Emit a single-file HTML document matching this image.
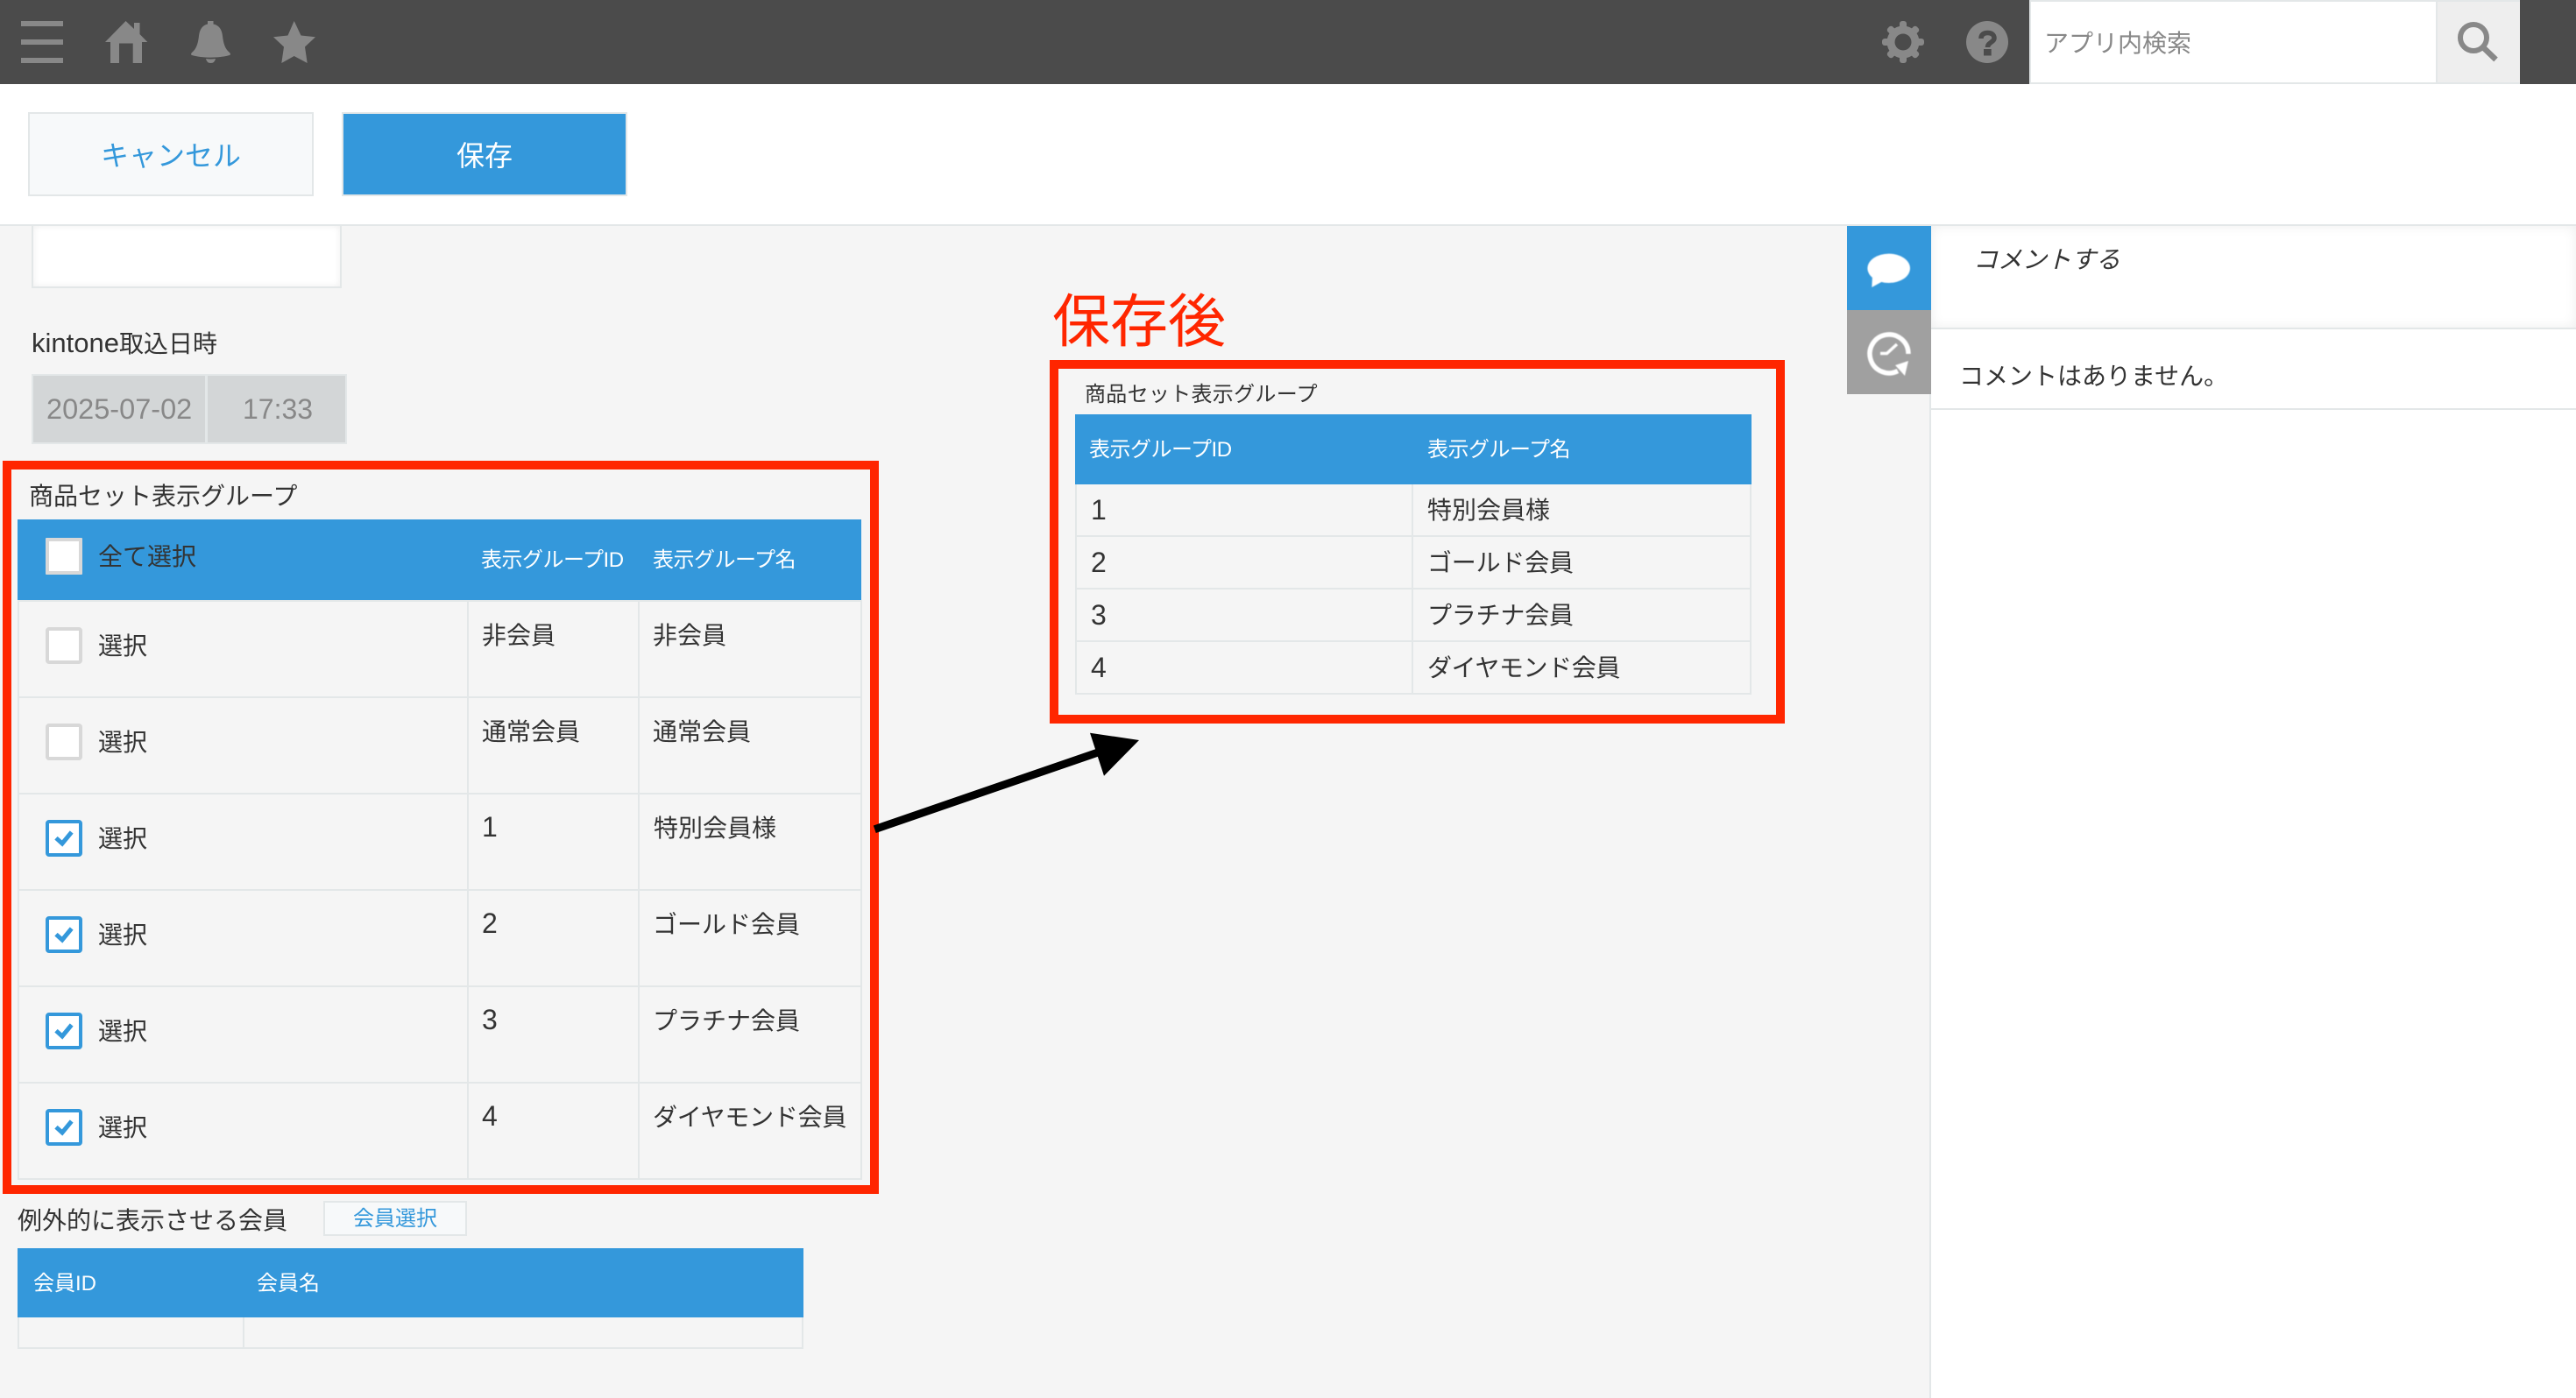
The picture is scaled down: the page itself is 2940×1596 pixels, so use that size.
<!DOCTYPE html>
<html lang="ja">
<head>
<meta charset="utf-8">
<title>kintone</title>
<style>
html,body{margin:0;padding:0}
body{position:relative;width:2940px;height:1596px;overflow:hidden;background:#f5f5f5;color:#333;font-family:"Liberation Sans","Noto Sans CJK JP",sans-serif}
div{box-sizing:border-box}
.a{position:absolute}
.t{position:absolute;white-space:nowrap;line-height:40px;height:40px;font-size:28px}
.w{color:#fff;font-size:24px}
.hd{letter-spacing:-.5px}
.n{font-size:32px}
.l{position:absolute;background:#e3e7e8}
.cb{position:absolute;left:52px;width:42px;height:42px;background:#fff;border:4px solid #d8d8d8;border-radius:4px}
.on{border-color:#3498db}
.on svg{position:absolute;left:-4px;top:-4px}
</style>
</head>
<body>

<!-- top bar -->
<div class="a" style="left:0;top:0;width:2940px;height:96px;background:#4b4b4b"></div>
<svg class="a" style="left:0;top:0" width="400" height="96" fill="#888">
<rect x="24" y="24" width="48" height="6"/><rect x="24" y="45" width="48" height="6"/><rect x="24" y="66" width="48" height="6"/>
<path d="M143.5 24 L153 33 V26 H159.5 V39 L168.3 48 H162 V72 H151.7 V49.5 H136 V72 H126 V48 H120 Z"/>
<path d="M237 24 H243.5 V27.5 C250 29 253 33 254 41 C255 50 257 56 262 60 Q264 62 262 63 C250 66.5 231 66.5 219 63 Q217 62 219 60 C224 56 226 50 227 41 C228 33 231 29 237 27.5 Z"/>
<path d="M235 67 Q240.5 68 246 67 Q245 72 240.5 72 Q236 72 235 67 Z"/>
<path d="M335.7 24 L343.5 40.5 L360 42.3 L348 53.5 L350.7 72 L335.7 64 L321.3 72 L324 53.5 L312 42.3 L328.5 40.5 Z"/>
</svg>
<svg class="a" style="left:2130px;top:0" width="180" height="96" viewBox="2130 0 180 96">
<g fill="#888">
<circle cx="2172" cy="48" r="18.5"/>
<g id="teeth">
<rect x="2168" y="24" width="8" height="48" rx="3"/>
<rect x="2148" y="44" width="48" height="8" rx="3"/>
<rect x="2168" y="24.5" width="8" height="47" rx="3" transform="rotate(45 2172 48)"/>
<rect x="2168" y="24.5" width="8" height="47" rx="3" transform="rotate(-45 2172 48)"/>
</g>
</g>
<circle cx="2172" cy="48" r="9.5" fill="#4b4b4b"/>
<circle cx="2268" cy="48" r="24" fill="#888"/>
<path d="M2261 44 C2261 39.5 2264 37.5 2268.5 37.5 C2273 37.5 2276 39.5 2276 43.5 C2276 48 2268.5 48.5 2268.5 54" fill="none" stroke="#4b4b4b" stroke-width="5.5"/>
<rect x="2264" y="56" width="8.7" height="7.5" fill="#4b4b4b"/>
</svg>

<!-- search -->
<div class="a" style="left:2316px;top:0;width:466px;height:96px;background:#fff;border-top:2px solid #e3e7e8;border-bottom:2px solid #e3e7e8;border-left:2px solid #e3e7e8"></div>
<div class="t" style="left:2333px;top:30px;color:#888">アプリ内検索</div>
<div class="a" style="left:2780px;top:0;width:96px;height:96px;background:#eee;border:2px solid #e3e7e8;border-right:none"></div>
<svg class="a" style="left:2780px;top:0" width="96" height="96" viewBox="2780 0 96 96" fill="none" stroke="#888">
<circle cx="2823" cy="43" r="15" stroke-width="6"/>
<path d="M2834.5 54.5 L2848.5 68" stroke-width="6.5"/>
</svg>

<!-- action bar -->
<div class="a" style="left:0;top:96px;width:2940px;height:162px;background:#fff;border-bottom:2px solid #e3e7e8"></div>
<div class="a" style="left:32px;top:128px;width:326px;height:96px;background:#f7f9fa;border:2px solid #e3e7e8"></div>
<div class="t" style="left:32px;top:158px;width:326px;text-align:center;font-size:32px;color:#3498db">キャンセル</div>
<div class="a" style="left:390px;top:128px;width:326px;height:96px;background:#3498db;border:2px solid #e3e7e8"></div>
<div class="t" style="left:390px;top:158px;width:326px;text-align:center;font-size:32px;color:#fff">保存</div>

<!-- partial white field -->
<div class="a" style="left:36px;top:258px;width:354px;height:71px;background:#fff;border:2px solid #e3e7e8;border-top:none;box-shadow:inset 0 0 8px rgba(0,0,0,.07)"></div>

<!-- kintone date -->
<div class="t" style="left:36px;top:372px"><span style="font-size:31px">kintone</span>取込日時</div>
<div class="a" style="left:36px;top:427px;width:200px;height:80px;background:#d3d6d7;border:2px solid #e3e7e8"></div>
<div class="a" style="left:235px;top:427px;width:161px;height:80px;background:#d3d6d7;border:2px solid #e3e7e8"></div>
<div class="t" style="left:53px;top:447px;font-size:32.5px;color:#888">2025-07-02</div>
<div class="t" style="left:277px;top:447px;font-size:32px;color:#888">17:33</div>

<!-- left table -->
<div class="t" style="left:33px;top:547px">商品セット表示グループ</div>
<div class="a" style="left:20px;top:593px;width:963px;height:92px;background:#3498db"></div>
<div class="cb" style="top:614px;border-radius:1px"></div>
<div class="t" style="left:112px;top:616px">全て選択</div>
<div class="t w hd" style="left:549px;top:620px">表示グループID</div>
<div class="t w hd" style="left:745px;top:620px">表示グループ名</div>

<div class="l" style="left:20px;top:685px;width:964px;height:2px"></div>
<div class="l" style="left:20px;top:795px;width:964px;height:2px"></div>
<div class="l" style="left:20px;top:905px;width:964px;height:2px"></div>
<div class="l" style="left:20px;top:1015px;width:964px;height:2px"></div>
<div class="l" style="left:20px;top:1125px;width:964px;height:2px"></div>
<div class="l" style="left:20px;top:1235px;width:964px;height:2px"></div>
<div class="l" style="left:20px;top:1345px;width:964px;height:2px"></div>
<div class="l" style="left:20px;top:685px;width:2px;height:662px"></div>
<div class="l" style="left:533px;top:685px;width:2px;height:662px"></div>
<div class="l" style="left:728px;top:685px;width:2px;height:662px"></div>
<div class="l" style="left:982px;top:685px;width:2px;height:662px"></div>

<div class="cb" style="top:716px"></div>
<div class="t" style="left:112px;top:718px">選択</div>
<div class="t" style="left:550px;top:706px">非会員</div>
<div class="t" style="left:745px;top:706px">非会員</div>

<div class="cb" style="top:826px"></div>
<div class="t" style="left:112px;top:828px">選択</div>
<div class="t" style="left:550px;top:816px">通常会員</div>
<div class="t" style="left:745px;top:816px">通常会員</div>

<div class="cb on" style="top:936px"><svg width="42" height="42" viewBox="52 936 42 42"><path d="M64 956.7 L71 963 L81.7 950" fill="none" stroke="#3498db" stroke-width="5"/></svg></div>
<div class="t" style="left:112px;top:938px">選択</div>
<div class="t n" style="left:550px;top:924px">1</div>
<div class="t" style="left:746px;top:926px">特別会員様</div>

<div class="cb on" style="top:1046px"><svg width="42" height="42" viewBox="52 936 42 42"><path d="M64 956.7 L71 963 L81.7 950" fill="none" stroke="#3498db" stroke-width="5"/></svg></div>
<div class="t" style="left:112px;top:1048px">選択</div>
<div class="t n" style="left:550px;top:1034px">2</div>
<div class="t" style="left:745px;top:1036px">ゴールド会員</div>

<div class="cb on" style="top:1156px"><svg width="42" height="42" viewBox="52 936 42 42"><path d="M64 956.7 L71 963 L81.7 950" fill="none" stroke="#3498db" stroke-width="5"/></svg></div>
<div class="t" style="left:112px;top:1158px">選択</div>
<div class="t n" style="left:550px;top:1144px">3</div>
<div class="t" style="left:745px;top:1146px">プラチナ会員</div>

<div class="cb on" style="top:1266px"><svg width="42" height="42" viewBox="52 936 42 42"><path d="M64 956.7 L71 963 L81.7 950" fill="none" stroke="#3498db" stroke-width="5"/></svg></div>
<div class="t" style="left:112px;top:1268px">選択</div>
<div class="t n" style="left:550px;top:1254px">4</div>
<div class="t" style="left:745px;top:1256px;letter-spacing:-.25px">ダイヤモンド会員</div>

<!-- red box left -->
<div class="a" style="left:3px;top:526px;width:1000px;height:837px;border:10px solid #ff2600"></div>

<!-- member table -->
<div class="t" style="left:20px;top:1374px">例外的に表示させる会員</div>
<div class="a" style="left:369px;top:1371px;width:164px;height:40px;background:#f7f9fa;border:2px solid #e3e7e8"></div>
<div class="t" style="left:369px;top:1372px;width:164px;text-align:center;font-size:24px;color:#3498db">会員選択</div>
<div class="a" style="left:20px;top:1425px;width:897px;height:79px;background:#3498db"></div>
<div class="t w" style="left:38px;top:1446px">会員ID</div>
<div class="t w" style="left:293px;top:1446px">会員名</div>
<div class="a" style="left:20px;top:1504px;width:897px;height:36px;border:2px solid #e3e7e8;border-top:none"></div>
<div class="l" style="left:277px;top:1504px;width:2px;height:36px"></div>

<!-- after-save -->
<div class="t" style="left:1201px;top:327px;font-size:66px;line-height:80px;height:80px;color:#ff2600">保存後</div>
<div class="a" style="left:1198px;top:411px;width:839px;height:415px;border:10px solid #ff2600"></div>
<div class="t" style="left:1238px;top:431px;font-size:24px;letter-spacing:.3px">商品セット表示グループ</div>
<div class="a" style="left:1227px;top:473px;width:772px;height:80px;background:#3498db"></div>
<div class="t w hd" style="left:1243px;top:494px">表示グループID</div>
<div class="t w hd" style="left:1629px;top:494px">表示グループ名</div>
<div class="l" style="left:1227px;top:611px;width:772px;height:2px"></div>
<div class="l" style="left:1227px;top:671px;width:772px;height:2px"></div>
<div class="l" style="left:1227px;top:731px;width:772px;height:2px"></div>
<div class="l" style="left:1227px;top:791px;width:772px;height:2px"></div>
<div class="l" style="left:1227px;top:553px;width:2px;height:240px"></div>
<div class="l" style="left:1611px;top:553px;width:2px;height:240px"></div>
<div class="l" style="left:1997px;top:553px;width:2px;height:240px"></div>
<div class="t n" style="left:1245px;top:562px">1</div>
<div class="t" style="left:1629px;top:563px">特別会員様</div>
<div class="t n" style="left:1245px;top:622px">2</div>
<div class="t" style="left:1629px;top:623px;letter-spacing:-.2px">ゴールド会員</div>
<div class="t n" style="left:1245px;top:682px">3</div>
<div class="t" style="left:1629px;top:683px;letter-spacing:-.2px">プラチナ会員</div>
<div class="t n" style="left:1245px;top:742px">4</div>
<div class="t" style="left:1629px;top:743px;letter-spacing:-.4px">ダイヤモンド会員</div>

<!-- arrow -->
<svg class="a" style="left:990px;top:820px" width="330" height="140" viewBox="990 820 330 140">
<path d="M998.3 946.7 L1256 858" stroke="#000" stroke-width="9" fill="none"/>
<path d="M1244 836.7 L1300 845 L1260 885.7 Z" fill="#000"/>
</svg>

<!-- side tabs -->
<div class="a" style="left:2108px;top:258px;width:96px;height:96px;background:#3498db"></div>
<div class="a" style="left:2108px;top:354px;width:96px;height:96px;background:#a0a0a0"></div>
<svg class="a" style="left:2108px;top:258px;filter:blur(.6px)" width="96" height="192" viewBox="2108 258 96 192">
<ellipse cx="2155.7" cy="306.3" rx="24.3" ry="16.7" fill="#fff"/>
<path d="M2137 315 L2136.3 328 L2149 321 Z" fill="#fff"/>
<path d="M2178 404 A22 22 0 1 0 2166 423.5" fill="none" stroke="#fff" stroke-width="5.5"/>
<path d="M2163 417 L2178 412 L2174 429 Z" fill="#fff"/>
<path d="M2165 393 L2153.5 403.5 L2146 403.5" fill="none" stroke="#fff" stroke-width="3.5"/>
</svg>

<!-- right panel -->
<div class="a" style="left:2204px;top:258px;width:736px;height:1338px;background:#fff"></div>
<div class="a" style="left:2202px;top:450px;width:2px;height:1146px;background:#e3e7e8"></div>
<div class="a" style="left:2204px;top:258px;width:736px;height:118px;background:#fff;border-bottom:2px solid #e3e7e8;box-shadow:inset 0 0 14px rgba(0,0,0,.07)"></div>
<div class="t" style="left:2252px;top:277px;font-style:italic">コメントする</div>
<div class="t" style="left:2236px;top:410px">コメントはありません。</div>
<div class="a" style="left:2204px;top:466px;width:736px;height:2px;background:#e3e7e8"></div>

</body>
</html>
